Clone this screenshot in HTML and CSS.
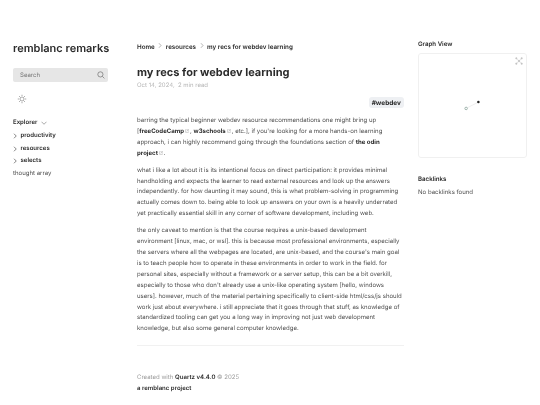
FILE: index.html
```
<!DOCTYPE html>
<html lang="en">
<head>
<meta charset="utf-8">
<title>my recs for webdev learning</title>
<link rel="stylesheet" href="styles.css">
</head>
<body>
<div class="page">
  <aside class="left">
    <h2 class="site-title">remblanc remarks</h2>
    <div class="search">
      <span>Search</span>
      <svg class="search-icon" viewBox="0 0 20 20"><circle cx="8.5" cy="8.5" r="6.5"/><path d="M13.5 13.5L18.5 18.5"/></svg>
    </div>
    <svg class="sun" viewBox="0 0 20 20"><circle cx="10" cy="10" r="4"/><path d="M10 1.500V4M10 16V18.500M1.500 10H4M16 10H18.500M4 4L5.800 5.800M14.200 14.200L16 16M4 16L5.800 14.200M14.200 5.800L16 4"/></svg>
    <div class="explorer-head">
      <span>Explorer</span>
      <svg class="chev-down" viewBox="0 0 12 8"><path d="M1 1.500L6 6.500L11 1.500"/></svg>
    </div>
    <ul class="tree">
      <li class="folder"><svg class="chev" viewBox="0 0 8 12"><path d="M2 1.500L6.500 6L2 10.500"/></svg>productivity</li>
      <li class="folder"><svg class="chev" viewBox="0 0 8 12"><path d="M2 1.500L6.500 6L2 10.500"/></svg>resources</li>
      <li class="folder"><svg class="chev" viewBox="0 0 8 12"><path d="M2 1.500L6.500 6L2 10.500"/></svg>selects</li>
      <li class="file">thought array</li>
    </ul>
  </aside>
  <main class="center">
    <nav class="crumbs">
      <a>Home</a><svg class="crumb-sep" viewBox="0 0 8 12"><path d="M2 1.500L6 6L2 10.500"/></svg>
      <a>resources</a><svg class="crumb-sep" viewBox="0 0 8 12"><path d="M2 1.500L6 6L2 10.500"/></svg>
      <a>my recs for webdev learning</a>
    </nav>
    <h1>my recs for webdev learning</h1>
    <p class="meta">Oct 14, 2024, &nbsp;2 min read</p>
    <div class="tags"><span class="tag">#webdev</span></div>
    <article>
      <p>barring the typical beginner webdev resource recommendations one might bring up<br>[<a>freeCodeCamp</a><svg class="ext" viewBox="0 0 10 10"><path d="M4 1.500H1.500V8.500H8.500V6M5.500 1.500H8.500V4.500M8.500 1.500L4.500 5.500"/></svg>, <a>w3schools</a><svg class="ext" viewBox="0 0 10 10"><path d="M4 1.500H1.500V8.500H8.500V6M5.500 1.500H8.500V4.500M8.500 1.500L4.500 5.500"/></svg>, etc.], if you're looking for a more hands-on learning<br>approach, i can highly recommend going through the foundations section of <a>the odin</a><br><a>project</a><svg class="ext" viewBox="0 0 10 10"><path d="M4 1.500H1.500V8.500H8.500V6M5.500 1.500H8.500V4.500M8.500 1.500L4.500 5.500"/></svg>.</p>
      <p>what i like a lot about it is its intentional focus on direct participation: it provides minimal<br>handholding and expects the learner to read external resources and look up the answers<br>independently. for how daunting it may sound, this is what problem-solving in programming<br>actually comes down to. being able to look up answers on your own is a heavily underrated<br>yet practically essential skill in any corner of software development, including web.</p>
      <p>the only caveat to mention is that the course requires a unix-based development<br>environment [linux, mac, or wsl]. this is because most professional environments, especially<br>the servers where all the webpages are located, are unix-based, and the course's main goal<br>is to teach people how to operate in these environments in order to work in the field. for<br>personal sites, especially without a framework or a server setup, this can be a bit overkill,<br>especially to those who don't already use a unix-like operating system [hello, windows<br>users]. however, much of the material pertaining specifically to client-side html/css/js should<br>work just about everywhere. i still appreciate that it goes through that stuff, as knowledge of<br>standardized tooling can get you a long way in improving not just web development<br>knowledge, but also some general computer knowledge.</p>
    </article>
    <hr>
    <footer>
      <p>Created with <a>Quartz v4.4.0</a> © 2025</p>
      <p><a>a remblanc project</a></p>
    </footer>
  </main>
  <aside class="right">
    <h3>Graph View</h3>
    <div class="graph">
      <svg class="graph-svg" viewBox="0 0 109 105">
        <path class="edge" d="M48 55.500L60.500 49"/>
        <circle class="node-a" cx="48" cy="55.500" r="1.300"/>
        <circle class="node-b" cx="60.500" cy="49" r="1.300"/>
      </svg>
      <svg class="global" viewBox="0 0 12 12"><circle cx="2" cy="2" r="1.200"/><circle cx="10" cy="2" r="1.200"/><circle cx="2" cy="10" r="1.200"/><circle cx="10" cy="10" r="1.200"/><circle cx="6" cy="6" r="1.500"/><path d="M2 2L10 10M10 2L2 10"/></svg>
    </div>
    <h3 class="back-title">Backlinks</h3>
    <p class="no-back">No backlinks found</p>
  </aside>
</div>
</body>
</html>
```
FILE: styles.css
```
* { box-sizing: border-box; }
html, body { margin: 0; padding: 0; background: #fff; }
body { font-family: Inter, "Liberation Sans", sans-serif; font-size: 6.050px; color: #4e4e4e; width: 540px; height: 405px; overflow: hidden; text-rendering: geometricPrecision; }
.page { display: grid; grid-template-columns: 124px 281px 109px; padding-left: 13px; filter: blur(0.2px); }
.left { padding-top: 41px; width: 95px; }
.site-title { margin: 0; font-size: 11px; font-weight: 600; color: #2b2b2b; line-height: 14px; white-space: nowrap; }
.search { margin-top: 13px; height: 14px; background: #e6e6e6; border-radius: 2px; display: flex; align-items: center; justify-content: space-between; padding: 0 3px 0 7px; color: #777; }
.search-icon { width: 8px; height: 8px; fill: none; stroke: #555; stroke-width: 1.400; }
.sun { display: block; width: 10px; height: 10px; margin: 12px 0 0 4px; fill: none; stroke: #555; stroke-width: 1; }
.explorer-head { margin-top: 14px; display: flex; align-items: center; gap: 4px; font-weight: 600; color: #2b2b2b; line-height: 10px; }
.chev-down { width: 6px; height: 4px; fill: none; stroke: #555; stroke-width: 1; }
.tree { list-style: none; margin: 4px 0 0; padding: 0; }
.tree li { line-height: 8px; margin-bottom: 4.500px; }
.folder { display: flex; align-items: center; gap: 3.500px; color: #2b2b2b; font-weight: 600; }
.chev { width: 4px; height: 6px; fill: none; stroke: #333; stroke-width: 1.200; }
.file { color: #4e4e4e; }
.center { padding-top: 42px; width: 266.500px; }
.crumbs { display: flex; align-items: center; gap: 3.500px; color: #2b2b2b; font-weight: 600; font-size: 6.250px; line-height: 10px; }
.crumb-sep { width: 4px; height: 7px; fill: none; stroke: #444; stroke-width: 0.800; margin-top: -3px; }
h1 { margin: 13px 0 0; font-size: 11px; font-weight: 700; color: #2b2b2b; line-height: 14px; }
.meta { margin: 3px 0 0; font-size: 6px; color: #b5b5b5; line-height: 8px; }
.tags { display: flex; justify-content: flex-end; margin-top: 7px; }
.tag { background: #eef0f3; border-radius: 3px; padding: 1.500px 2.500px; font-size: 6.500px; font-weight: 700; color: #2b2b2b; line-height: 8px; }
article { margin-top: 8px; line-height: 10.900px; white-space: nowrap; }
article p { margin: 0 0 6px; }
article a { color: #2b2b2b; font-weight: 700; }
.ext { width: 4px; height: 4px; margin: 0 1px 0 1px; fill: none; stroke: #777; stroke-width: 0.800; }
hr { margin: 10px 0 0; border: 0; height: 1px; background: #f1f1f1; }
footer { margin-top: 26px; color: #9a9a9a; line-height: 11px; }
footer p { margin: 0; }
footer a { color: #2b2b2b; font-weight: 600; }
.right { padding-top: 41px; }
h3 { margin: 0; font-size: 6.150px; font-weight: 600; color: #2b2b2b; line-height: 8px; }
.graph { position: relative; margin-top: 4px; height: 105px; border: 1px solid #f0f0f0; border-radius: 3px; }
.graph-svg { display: block; width: 100%; height: 100%; }
.edge { fill: none; stroke: #ddd; stroke-width: 0.500; }
.node-a { fill: #fff; stroke: #7d9a90; stroke-width: 0.700; }
.node-b { fill: #222; }
.global { position: absolute; top: 3px; right: 3px; width: 8px; height: 8px; fill: #bbb; stroke: #ccc; stroke-width: 0.700; }
.back-title { margin-top: 18px; }
.no-back { margin: 5px 0 0; line-height: 8px; }
```
